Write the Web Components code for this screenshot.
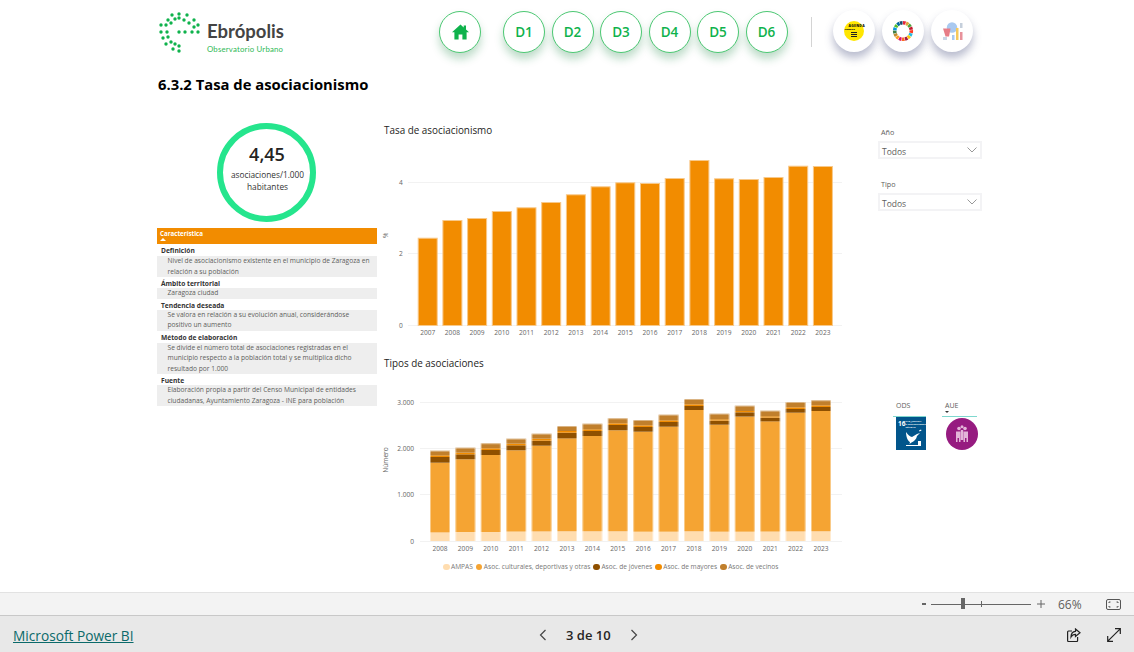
<!DOCTYPE html>
<html lang="es">
<head>
<meta charset="utf-8">
<title>6.3.2 Tasa de asociacionismo</title>
<style>
  html, body { margin: 0; height: 100%; overflow: hidden; background: #fff; }
  body { font-family: "Open Sans", "Noto Sans", sans-serif; color: #252423; display: flex; flex-direction: column; height: 652px; }
</style>
</head>
<body>
<eb-report>
  <eb-header slot="header"></eb-header>
  <span slot="title">6.3.2 Tasa de asociacionismo</span>

  <eb-kpi slot="left" value="4,45">asociaciones/1.000<br>habitantes</eb-kpi>
  <eb-table slot="left"></eb-table>

  <eb-bar-chart slot="middle"></eb-bar-chart>
  <eb-stacked-chart slot="middle"></eb-stacked-chart>

  <eb-slicer slot="right" label="Año">Todos</eb-slicer>
  <eb-slicer slot="right" label="Tipo" style="margin-top:19px">Todos</eb-slicer>
  <eb-badges slot="right"></eb-badges>
</eb-report>
<eb-zoom-bar></eb-zoom-bar>
<eb-footer-bar></eb-footer-bar>

<script>
/**
 * Small helper, every element below attaches an open shadow root the same way.
 *
 * @param {HTMLElement} el the host element.
 * @param {string} html the markup and styles of the shadow root.
 */
const shadow = (el, html) => {
  const template = document.createElement('template')
  template.innerHTML = html
  el.attachShadow({ mode: 'open' }).appendChild(template.content.cloneNode(true))
}

/**
 * The page body of the report.
 */
customElements.define('eb-report',
  class extends HTMLElement {
    constructor () {
      super()
      shadow(this, `
        <style>
          :host { display: block; height: 592px; box-sizing: border-box; padding: 11px 0 0 157px; }
          #title { margin-left: 1px; height: 22px; margin-top: 20px; font-size: 14.8px; font-weight: 700; line-height: 22px; color: #000; }
          #content { display: grid; grid-template-columns: 220px 501px 104px; }
          #left { padding-top: 28px; }
          #middle { padding-top: 25px; }
          #right { padding-top: 31px; }
        </style>
        <slot name="header"></slot>
        <div id="title"><slot name="title"></slot></div>
        <div id="content">
          <div id="left"><slot name="left"></slot></div>
          <div id="middle"><slot name="middle"></slot></div>
          <div id="right"><slot name="right"></slot></div>
        </div>
      `)
    }
  }
)

/**
 * One round button of the header.
 */
customElements.define('eb-nav-button',
  class extends HTMLElement {
    constructor () {
      super()
      shadow(this, `
        <style>
          :host { display: flex; align-items: center; justify-content: center; box-sizing: border-box; width: 42px; height: 42px;
            border-radius: 50%; background: #fff; border: 1px solid #4cc873; box-shadow: 0 6px 8px rgba(20, 130, 60, .28);
            color: #0fb24c; font-size: 13.5px; font-weight: 600; flex: none; }
          :host([plain]) { border-color: transparent; box-shadow: 0 6px 9px rgba(70, 80, 125, .38); }
        </style>
        <slot></slot>
      `)
    }
  }
)

/**
 * Logo of Ebrópolis, the dots are the arc of the mark.
 */
customElements.define('eb-logo',
  class extends HTMLElement {
    constructor () {
      super()
      const dots = [[28, 15], [21, 16], [36, 16], [43, 21], [47, 26], [47, 33], [41, 33], [34, 33], [28, 33],
        [17, 21], [24, 20], [28, 19], [33, 21], [38, 24], [43, 28], [10, 26], [15, 26], [20, 24],
        [10, 33], [16, 33], [12, 39], [17, 38], [15, 45], [20, 43], [22, 50], [24, 45], [28, 52], [28, 47]]
        .map(([x, y]) => `<circle cx="${x - 7}" cy="${y - 12}" r="1.7"/>`).join('')
      shadow(this, `
        <style>
          :host { display: flex; width: 282px; flex: none; gap: 7px; padding-left: 1px; box-sizing: border-box; }
          svg { width: 42px; height: 42px; flex: none; }
          #name { font-family: Lato, sans-serif; font-size: 18.5px; font-weight: 700; color: #444; line-height: 22px; margin-top: 9px; }
          #sub { font-family: Lato, sans-serif; font-size: 7.8px; font-weight: 400; color: #30b957; line-height: 10px; margin-top: 2px; letter-spacing: .2px; }
        </style>
        <svg viewBox="0 0 42 42" fill="#0fb24c">${dots}</svg>
        <div><div id="name">Ebrópolis</div><div id="sub">Observatorio Urbano</div></div>
      `)
    }
  }
)

/**
 * Top row with logo and navigation.
 */
customElements.define('eb-header',
  class extends HTMLElement {
    constructor () {
      super()
      // wheel of the 17 goals
      const colors = ['#e5243b', '#dda63a', '#4c9f38', '#c5192d', '#ff3a21', '#26bde2', '#fcc30b', '#a21942', '#fd6925', '#dd1367', '#fd9d24', '#bf8b2e', '#3f7e44', '#0a97d9', '#56c02b', '#00689d', '#19486a']
      const wheel = colors.map((c, i) => {
        const a = i / 17 * Math.PI * 2 - Math.PI / 2
        const b = (i + 0.85) / 17 * Math.PI * 2 - Math.PI / 2
        return `<path d="M${(11 + 8.3 * Math.cos(a)).toFixed(2)} ${(11 + 8.3 * Math.sin(a)).toFixed(2)}A8.3 8.3 0 0 1 ${(11 + 8.3 * Math.cos(b)).toFixed(2)} ${(11 + 8.3 * Math.sin(b)).toFixed(2)}" stroke="${c}" stroke-width="3.6" fill="none"/>`
      }).join('')
      shadow(this, `
        <style>
          :host { display: flex; align-items: flex-start; height: 42px; }
          nav { display: flex; gap: 6.5px; margin-left: 22px; }
          #tools { display: flex; gap: 7px; margin-top: -1px; }
          #sep { width: 1px; height: 30px; background: #d4d4d4; margin: 6px 21px 0 23px; flex: none; }
          #agenda { width: 20px; height: 20px; border-radius: 50%; background: #ffe600; font-weight: 800; color: #111; position: relative; }
          #agenda span { position: absolute; white-space: nowrap; }
          #agenda .a { left: 5px; top: 3px; font-size: 3.4px; line-height: 4px; letter-spacing: .3px; }
          #agenda .u { left: 1px; top: 7px; font-size: 2.4px; line-height: 3px; }
          #agenda i { position: absolute; left: 7px; width: 6px; height: 1px; background: #222; }
        </style>
        <eb-logo></eb-logo>
        <eb-nav-button>
          <svg width="17" height="16" viewBox="0 0 17 16" fill="#0fb24c"><path d="M8.5 .5 0 8.2h2.4V15.500h4.200v-5h3.800v5h4.200V8.200H17l-3-2.700V1.500h-2.300v1.900z"/></svg>
        </eb-nav-button>
        <nav>
          <eb-nav-button>D1</eb-nav-button>
          <eb-nav-button>D2</eb-nav-button>
          <eb-nav-button>D3</eb-nav-button>
          <eb-nav-button>D4</eb-nav-button>
          <eb-nav-button>D5</eb-nav-button>
          <eb-nav-button>D6</eb-nav-button>
        </nav>
        <div id="sep"></div>
        <div id="tools">
          <eb-nav-button plain>
            <div id="agenda"><span class="a">AGENDA</span><span class="u">URBANA</span><i style="top:11px"></i><i style="top:13px"></i><i style="top:15px"></i></div>
          </eb-nav-button>
          <eb-nav-button plain><svg width="22" height="22" viewBox="0 0 22 22">${wheel}</svg></eb-nav-button>
          <eb-nav-button plain>
            <svg width="22" height="22" viewBox="0 0 22 22">
              <circle cx="11" cy="7.500" r="5.200" fill="#a9c9f0"/>
              <path d="M2 8.500h7.500L8 16.500H4.500z" fill="#e77d87"/>
              <rect x="2" y="17" width="4" height="3" fill="#c9d6e6"/>
              <rect x="11" y="15" width="2.500" height="5" fill="#a9c9f0"/>
              <rect x="15" y="8" width="2.500" height="12" fill="#f6c95c"/>
              <rect x="19" y="12" width="2.500" height="8" fill="#e8929b"/>
              <rect x="19" y="3" width="2.500" height="5" fill="#c5cfdb"/>
            </svg>
          </eb-nav-button>
        </div>
      `)
    }
  }
)

/**
 * The ring with the current figure.
 */
customElements.define('eb-kpi',
  class extends HTMLElement {
    constructor () {
      super()
      shadow(this, `
        <style>
          :host { display: flex; flex-direction: column; align-items: center; justify-content: center; box-sizing: border-box;
            width: 99px; height: 99px; margin: 0 0 6px 60px; border: 6px solid #25e58d; border-radius: 50%; background: #fff; text-align: center; }
          #value { font-size: 18px; font-weight: 600; line-height: 24px; color: #252423; margin-top: -10px; padding-left: 1px; }
          #unit { font-size: 8.300px; line-height: 12px; color: #333; margin-top: 3px; padding-left: 2px; white-space: nowrap; }
        </style>
        <div id="value">${this.getAttribute('value')}</div>
        <div id="unit"><slot></slot></div>
      `)
    }
  }
)

/**
 * The table that describes the indicator.
 */
customElements.define('eb-table',
  class extends HTMLElement {
    constructor () {
      super()
      const rows = [
        ['Definición', 'Nivel de asociacionismo existente en el municipio de Zaragoza en<br>relación a su población', 12],
        ['Ámbito territorial', 'Zaragoza ciudad', 11],
        ['Tendencia deseada', 'Se valora en relación a su evolución anual, considerándose<br>positivo un aumento', 11],
        ['Método de elaboración', 'Se divide el número total de asociaciones registradas en el<br>municipio respecto a la población total y se multiplica dicho<br>resultado por 1.000', 12],
        ['Fuente', 'Elaboración propia a partir del Censo Municipal de entidades<br>ciudadanas, Ayuntamiento Zaragoza - INE para población', 11]
      ]
      const body = rows.map(([label, text, h]) => `<div class="label" style="height:${h}px;line-height:${h + 2}px">${label}</div><div class="value">${text}</div>`).join('')
      shadow(this, `
        <style>
          :host { display: block; width: 220px; font-size: 6.650px; }
          #head { height: 16px; box-sizing: border-box; background: #f28c00; color: #fff; font-size: 6.200px; font-weight: 700; padding: 1px 0 0 3px; line-height: 10px; position: relative; }
          #head i { position: absolute; left: 3px; bottom: 3px; border: 3px solid transparent; border-top: 0; border-bottom: 3px solid #fff; }
          .label { font-weight: 700; color: #333; padding-left: 4px; }
          .value { background: #eee; color: #605e5c; padding-left: 10.500px; line-height: 10.500px; white-space: nowrap; }
        </style>
        <div id="head">Característica<i></i></div>
        ${body}
      `)
    }
  }
)

/**
 * Column chart of the rate. The svg uses page coordinates in its viewBox.
 */
customElements.define('eb-bar-chart',
  class extends HTMLElement {
    constructor () {
      super()
      const tops = [237.7, 220, 218, 211, 207.3, 202, 194.3, 186.3, 182.3, 183, 178, 160, 178.3, 179, 177, 165.7, 166]
      const bars = tops.map((t, i) => {
        const x = 417.7 + 24.7 * i
        return `<rect x="${x + 0.5}" y="${t + 0.5}" width="19" height="${325 - t}" fill="#f28c00" stroke="#f8c98a"/>
          <text x="${x + 10}" y="334.500" text-anchor="middle">${2007 + i}</text>`
      }).join('')
      shadow(this, `
        <style>
          :host { display: block; height: 233px; }
          #title { font-size: 9.900px; line-height: 20px; padding-left: 7px; color: #252423; height: 20px; }
          svg { display: block; }
          text { font-size: 6.600px; fill: #666; font-family: "Open Sans", sans-serif; }
          line { stroke: #f2f2f2; }
        </style>
        <div id="title">Tasa de asociacionismo</div>
        <svg width="490" height="200" viewBox="377 140 490 200">
          <line x1="408" x2="842" y1="182.500" y2="182.500"/>
          <line x1="408" x2="842" y1="253.500" y2="253.500"/>
          <line x1="408" x2="842" y1="325.500" y2="325.500"/>
          <text x="399" y="185">4</text>
          <text x="399" y="256">2</text>
          <text x="399" y="328">0</text>
          <text transform="translate(388 238) rotate(-90)">%</text>
          ${bars}
        </svg>
      `)
    }
  }
)

/**
 * Stacked columns per type of association, also in page coordinates.
 */
customElements.define('eb-stacked-chart',
  class extends HTMLElement {
    constructor () {
      super()
      // top of each segment: ampas, culturales, jovenes, mayores, vecinos
      const first = [[547, 338, 321, 316, 302], [546, 328, 313, 308, 293], [546, 315, 300, 295, 280], [545, 301, 286, 281, 266],
        [544, 287, 272, 266, 251], [544, 265, 248, 243, 228], [544, 258, 243, 238, 221], [544, 241, 225, 220, 205]]
        .map(r => r.map(p => 350 + p / 3))
      const second = [[455, 155, 141, 136, 120], [455, 140, 126, 121, 104], [454, 90, 78, 73, 57], [455, 134, 122, 118, 101],
        [455, 110, 97, 93, 77], [455, 124, 113, 109, 92], [454, 98, 87, 82, 66], [454, 93, 81, 76, 61]]
        .map(r => r.map(p => 380 + p / 3))
      const colors = ['#ffddb0', '#f5a433', '#8f5000', '#f28c00', '#c07f2c']
      const bars = first.concat(second).map((r, i) => {
        const x = 430 + 25.4 * i
        const segs = r.map((t, s) => {
          const bottom = s === 0 ? 541 : r[s - 1]
          return `<rect x="${x.toFixed(1)}" y="${t.toFixed(1)}" width="20" height="${(bottom - t).toFixed(1)}" fill="${colors[s]}"/>`
        }).join('')
        // light edge around the whole column
        const top = r[4].toFixed(1)
        const edge = `<path d="M${(x + 0.5).toFixed(1)} 541V${top}M${(x + 19.5).toFixed(1)} 541V${top}M${x.toFixed(1)} ${(r[4] + 0.5).toFixed(1)}h20" stroke="#fff" stroke-opacity=".42" fill="none"/>`
        return `${segs}${edge}<text x="${(x + 10).toFixed(1)}" y="551" text-anchor="middle">${2008 + i}</text>`
      }).join('')
      const legend = ['AMPAS', 'Asoc. culturales, deportivas y otras', 'Asoc. de jóvenes', 'Asoc. de mayores', 'Asoc. de vecinos']
        .map((l, i) => `<span><i style="background:${colors[i]}"></i>${l}</span>`).join('')
      shadow(this, `
        <style>
          :host { display: block; }
          #title { font-size: 9.900px; line-height: 20px; padding-left: 7px; color: #252423; height: 20px; }
          svg { display: block; }
          text { font-size: 6.600px; fill: #666; font-family: "Open Sans", sans-serif; }
          line { stroke: #f2f2f2; }
          #legend { display: flex; gap: 3px; margin-left: 66px; margin-top: 1px; font-size: 6.600px; line-height: 12px; color: #777; white-space: nowrap; }
          #legend span { display: flex; align-items: center; gap: 1.500px; }
          #legend i { width: 6.500px; height: 6.500px; border-radius: 50%; display: block; }
        </style>
        <div id="title">Tipos de asociaciones</div>
        <svg width="490" height="187" viewBox="377 373 490 187">
          <line x1="420" x2="842" y1="402.500" y2="402.500"/>
          <line x1="420" x2="842" y1="448.500" y2="448.500"/>
          <line x1="420" x2="842" y1="494.500" y2="494.500"/>
          <line x1="420" x2="842" y1="541.500" y2="541.500"/>
          <g text-anchor="end">
            <text x="414" y="405">3.000</text>
            <text x="414" y="451">2.000</text>
            <text x="414" y="497">1.000</text>
            <text x="414" y="544">0</text>
          </g>
          <text transform="translate(388 460) rotate(-90)" text-anchor="middle">Número</text>
          ${bars}
        </svg>
        <div id="legend">${legend}</div>
      `)
    }
  }
)

/**
 * Dropdown filter.
 */
customElements.define('eb-slicer',
  class extends HTMLElement {
    constructor () {
      super()
      shadow(this, `
        <style>
          :host { display: block; width: 104px; }
          #label { font-size: 7.200px; line-height: 12px; color: #605e5c; padding-left: 3px; }
          #box { margin-top: 3px; height: 18px; box-sizing: border-box; border: 2px solid #f3f3f5; display: flex; align-items: center; justify-content: space-between;
            padding: 0 3px 0 2px; font-size: 8.500px; color: #605e5c; }
          #box span { padding-top: 3px; }
        </style>
        <div id="label">${this.getAttribute('label')}</div>
        <div id="box"><span><slot></slot></span>
          <svg width="10" height="6" viewBox="0 0 10 6" fill="none" stroke="#999"><path d="M.5 .5 5 5l4.500-4.500"/></svg>
        </div>
      `)
    }
  }
)

/**
 * The two goals the indicator belongs to.
 */
customElements.define('eb-badges',
  class extends HTMLElement {
    constructor () {
      super()
      shadow(this, `
        <style>
          :host { display: flex; margin: 189px 0 0 15px; gap: 16px; font-size: 7px; color: #605e5c; }
          .col { width: 33px; }
          .col + .col { width: 35px; }
          .name { height: 16px; line-height: 12px; padding-left: 3px; border-bottom: 1px solid #7fd8cf; position: relative; }
          .name i { position: absolute; left: 3px; top: 11px; border: 2.500px solid transparent; border-top: 2.500px solid #333; border-bottom: 0; }
          #ods { margin: 0 0 0 3px; width: 30px; height: 33px; background: #02558b; color: #fff; position: relative; overflow: hidden; }
          #ods b { position: absolute; left: 2px; top: 3px; font-size: 6.500px; line-height: 7px; }
          #ods span { position: absolute; left: 9.500px; top: 3px; font-size: 2.400px; line-height: 2.800px; font-weight: 700; white-space: nowrap; }
          #ods svg { position: absolute; left: 3px; top: 11px; }
          #aue { width: 32px; height: 32px; border-radius: 50%; background: #961b80; margin: 1px 0 0 4px; display: flex; align-items: center; justify-content: center; }
        </style>
        <div class="col">
          <div class="name">ODS</div>
          <div id="ods"><b>16</b><span>PAZ, JUSTICIA<br>E INSTITUCIONES<br>SÓLIDAS</span>
            <svg width="25" height="20" viewBox="0 0 25 20" fill="#fff"><path d="M7 4c2 3 4 4.500 6 5l5-3 3-1-3 3c-.5 3-3 5.500-5.500 6.500l-2 1.500.5-2C8.500 13 7 8 7 4z"/><path d="M20 2.500l2-1 .5 1-2 1z"/><rect x="19" y="13" width="3" height="5"/><rect x="7" y="17" width="12" height="1"/></svg>
          </div>
        </div>
        <div class="col">
          <div class="name">AUE<i></i></div>
          <div id="aue">
            <svg width="16" height="18" viewBox="0 0 16 18" fill="#e3b5d8"><circle cx="5" cy="3.500" r="1.800"/><circle cx="11" cy="3.500" r="1.800"/><circle cx="8" cy="1.800" r="1.500"/><path d="M2 6.500h4.500V17H5v-4H3.500v4H2zM9.500 6.500H14V17h-1.500v-4H11v4H9.500zM6.800 5H9.200V15H6.800z"/></svg>
          </div>
        </div>
      `)
    }
  }
)

/**
 * Gray bar with the zoom slider.
 */
customElements.define('eb-zoom-bar',
  class extends HTMLElement {
    constructor () {
      super()
      shadow(this, `
        <style>
          :host { display: flex; align-items: center; height: 24px; box-sizing: border-box; background: #f3f3f3; border-top: 1px solid #e2e2e2; border-bottom: 1px solid #c8c8c8; color: #605e5c; padding-left: 922px; flex: none; }
          #minus { width: 4px; height: 1.500px; background: #666; }
          #track { width: 100px; height: 1px; background: #666; margin: 0 6px 0 5px; position: relative; }
          #track i { position: absolute; left: 30px; top: -5.500px; width: 4px; height: 11px; background: #666; }
          #track b { position: absolute; left: 50px; top: -2.500px; width: 1px; height: 6px; background: #666; }
          #pct { font-size: 12px; margin-left: 13px; width: 48px; }
        </style>
        <div id="minus"></div>
        <div id="track"><i></i><b></b></div>
        <svg width="8" height="8" viewBox="0 0 8 8" stroke="#666" style="flex:none"><path d="M0 4h8M4 0v8"/></svg>
        <div id="pct">66%</div>
        <svg width="15" height="11" viewBox="0 0 15 11" fill="none" stroke="#555"><rect x=".5" y=".5" width="14" height="10" rx="1.500"/><path d="M3 4V3h1.500M12 4V3h-1.500M3 7v1h1.500M12 7v1h-1.500"/></svg>
      `)
    }
  }
)

/**
 * Footer of the embedded viewer.
 */
customElements.define('eb-footer-bar',
  class extends HTMLElement {
    constructor () {
      super()
      shadow(this, `
        <style>
          :host { display: grid; grid-template-columns: 526px auto 1fr; align-items: center; height: 36px; box-sizing: border-box; padding: 1px 13px 0; background: #e8e8e8; flex: none; color: #252423; }
          a { color: #0b6a6a; font-size: 13.700px; text-decoration: underline; white-space: nowrap; }
          #pages { display: flex; align-items: center; gap: 19px; font-size: 13px; font-weight: 600; }
          #right { display: flex; justify-content: flex-end; gap: 26px; }
        </style>
        <div><a>Microsoft Power BI</a></div>
        <div id="pages">
          <svg width="8" height="12" viewBox="0 0 8 12" fill="none" stroke="#444" stroke-width="1.200"><path d="M6.500 1 1.500 6l5 5"/></svg>
          <span>3 de 10</span>
          <svg width="8" height="12" viewBox="0 0 8 12" fill="none" stroke="#444" stroke-width="1.200"><path d="M1.500 1l5 5-5 5"/></svg>
        </div>
        <div id="right">
          <svg width="14" height="14" viewBox="0 0 14 14" fill="none" stroke="#222" stroke-width="1.200"><path d="M5 3H1.500A1 1 0 0 0 .6 4v8.500a1 1 0 0 0 1 1h8a1 1 0 0 0 1-1V9"/><path d="M8.500 1 13 4.800 8.500 8.500V6.300C6.500 6.300 5 7.200 4 9c0-3.500 2-5.500 4.500-5.700z"/></svg>
          <svg width="14" height="14" viewBox="0 0 14 14" fill="none" stroke="#222" stroke-width="1.200"><path d="M.8 13.200 13.200 .8M8 .7h5.300V6M.7 8v5.300H6"/></svg>
        </div>
      `)
    }
  }
)
</script>
</body>
</html>
